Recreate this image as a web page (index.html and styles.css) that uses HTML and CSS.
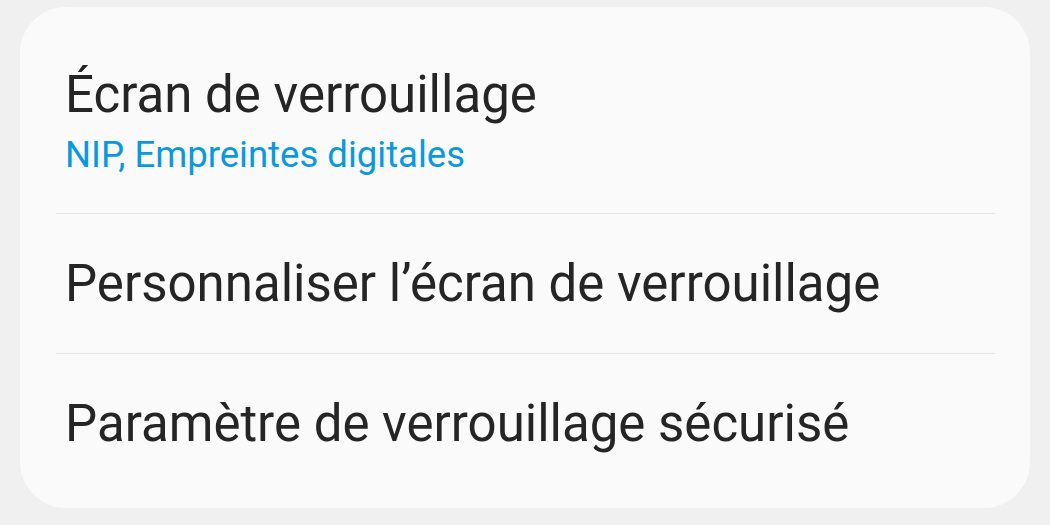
FILE: index.html
```html
<!DOCTYPE html>
<html lang="fr">
<head>
<meta charset="utf-8">
<link rel="stylesheet" href="styles.css">
</head>
<body>
<div class="card">
  <div class="row row-first">
    <div class="title">Écran de verrouillage</div>
    <div class="sub">NIP, Empreintes digitales</div>
  </div>
  <div class="divider"></div>
  <div class="row row-mid">
    <div class="title">Personnaliser l’écran de verrouillage</div>
  </div>
  <div class="divider"></div>
  <div class="row">
    <div class="title">Paramètre de verrouillage sécurisé</div>
  </div>
</div>
</body>
</html>
```
FILE: styles.css
```css
html, body {
  margin: 0;
  background: #f0f0f0;
}
body {
  padding: 7px 20px 0 20px;
  font-family: Roboto, "Liberation Sans", sans-serif;
}
.card {
  background: #fafafa;
  border-radius: 46px;
  padding: 15px 0 14px 0;
}
.row {
  height: 140px;
  box-sizing: border-box;
  display: flex;
  flex-direction: column;
  justify-content: center;
  padding-left: 45px;
}
.row-mid {
  height: 139px;
}
.row-first {
  height: 191px;
  justify-content: flex-start;
  padding-top: 43px;
}
.title {
  font-size: 51px;
  line-height: 60px;
  color: #252525;
}
.sub {
  font-size: 36.5px;
  line-height: 59px;
  color: #0b98df;
}
.divider {
  height: 1px;
  background: #e6e6e6;
  margin: 0 35px 0 36px;
}
```
